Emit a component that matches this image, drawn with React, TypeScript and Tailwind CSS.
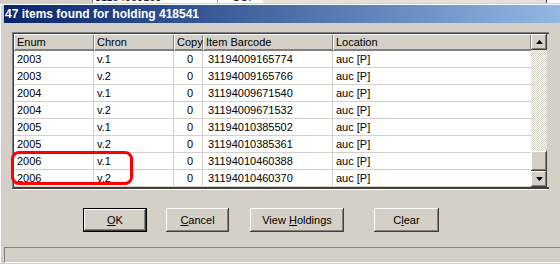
const rows = [
  { enumv: "2003", chron: "v.1", copy: "0", barcode: "31194009165774", loc: "auc [P]" },
  { enumv: "2003", chron: "v.2", copy: "0", barcode: "31194009165766", loc: "auc [P]" },
  { enumv: "2004", chron: "v.1", copy: "0", barcode: "31194009671540", loc: "auc [P]" },
  { enumv: "2004", chron: "v.2", copy: "0", barcode: "31194009671532", loc: "auc [P]" },
  { enumv: "2005", chron: "v.1", copy: "0", barcode: "31194010385502", loc: "auc [P]" },
  { enumv: "2005", chron: "v.2", copy: "0", barcode: "31194010385361", loc: "auc [P]" },
  { enumv: "2006", chron: "v.1", copy: "0", barcode: "31194010460388", loc: "auc [P]" },
  { enumv: "2006", chron: "v.2", copy: "0", barcode: "31194010460370", loc: "auc [P]" },
];

const raised =
  "shadow-[inset_-1px_-1px_0_#404040,inset_1px_1px_0_#ffffff,inset_-2px_-2px_0_#808080,inset_2px_2px_0_#d4d0c8]";

function Arrow({ down }: { down?: boolean }) {
  return (
    <svg width="7" height="4" viewBox="0 0 7 4">
      {down ? <polygon points="0,0 7,0 3.5,4" fill="#000" /> : <polygon points="0,4 7,4 3.5,0" fill="#000" />}
    </svg>
  );
}

function HeaderCell({ label, w }: { label: string; w: string }) {
  return (
    <div
      className={`${w} h-[16px] shrink-0 pl-[3px] flex items-center bg-[#d4d0c8] shadow-[inset_1px_1px_0_#ffffff,inset_-1px_-1px_0_#808080] whitespace-nowrap overflow-hidden`}
    >
      {label}
    </div>
  );
}

function Button({ children, w, isDefault }: { children: React.ReactNode; w: string; isDefault?: boolean }) {
  return (
    <div className={`${w} h-[24px] shrink-0 ${isDefault ? "border border-black" : ""}`}>
      <div className={`w-full h-full flex items-center justify-center bg-[#d4d0c8] ${raised}`}>{children}</div>
    </div>
  );
}

export default function App() {
  return (
    <div className="relative w-[560px] h-[264px] overflow-hidden bg-[#d4d0c8] text-[11px] text-black font-['Liberation_Sans',Arial,sans-serif] leading-none">
      {/* window behind the dialog */}
      <div className="h-[3px] flex overflow-hidden bg-[#d4d0c8]">
        <div className="w-[93px] shrink-0 border-r border-[#808080]" />
        <div className="w-[125px] shrink-0 bg-white border-r border-[#a0a0a0] overflow-hidden">
          <div className="-mt-[8px] pl-[2px]">31194009165</div>
        </div>
        <div className="w-[45px] shrink-0 bg-white overflow-hidden">
          <div className="-mt-[8px] pl-[14px]">COP</div>
        </div>
        <div className="w-[284px] shrink-0 bg-[#e4e2dc] border-r border-[#404040]" />
        <div className="flex-1 bg-white" />
      </div>

      {/* dialog */}
      <div className="border-t border-[#d4d0c8]">
        <div className="border-t border-l border-white pl-[3px]">
          <div className="h-[18px] flex items-center pl-[1px] bg-gradient-to-r from-[#0a246a] to-[#94b8e4] text-white text-[12px] font-bold">
            47 items found for holding 418541
          </div>

          <div className="pt-[9px] pl-[8px]">
            {/* list view */}
            <div className="w-[537px] border-t border-l border-[#808080] border-b border-r-0 border-b-[#ffffff]">
              <div className="border-t border-l border-[#404040] border-b-2 border-b-[#404040] flex">
                <div className="w-[517px] shrink-0 bg-white">
                  <div className="flex border-b border-[#808080]">
                    <HeaderCell label="Enum" w="w-[80px]" />
                    <HeaderCell label="Chron" w="w-[80px]" />
                    <HeaderCell label="Copy" w="w-[29px]" />
                    <HeaderCell label="Item Barcode" w="w-[130px]" />
                    <HeaderCell label="Location" w="w-[198px]" />
                  </div>
                  {rows.map((r, i) => (
                    <div key={i} className="flex h-[17px] border-b border-[#d4d0c8]">
                      <div className="w-[80px] shrink-0 pl-[3px] flex items-center border-r border-[#d4d0c8]">{r.enumv}</div>
                      <div className="w-[80px] shrink-0 pl-[3px] flex items-center border-r border-[#d4d0c8]">{r.chron}</div>
                      <div className="w-[29px] shrink-0 pr-[9px] flex items-center justify-end border-r border-[#d4d0c8]">{r.copy}</div>
                      <div className="w-[130px] shrink-0 pl-[5px] flex items-center border-r border-[#d4d0c8]">{r.barcode}</div>
                      <div className="flex-1 pl-[3px] flex items-center">{r.loc}</div>
                    </div>
                  ))}
                </div>
                {/* scrollbar */}
                <div className="w-[16px] shrink-0 flex flex-col">
                  <div className={`h-[16px] flex items-center justify-center bg-[#d4d0c8] ${raised}`}>
                    <Arrow />
                  </div>
                  <div className="flex-1 bg-[repeating-conic-gradient(#d4d0c8_0%_25%,#ffffff_0%_50%)] bg-[length:2px_2px]" />
                  <div className={`h-[20px] bg-[#d4d0c8] ${raised}`} />
                  <div className={`h-[16px] flex items-center justify-center bg-[#d4d0c8] ${raised}`}>
                    <Arrow down />
                  </div>
                </div>
              </div>
            </div>
          </div>

          {/* buttons */}
          <div className="flex mt-[18px] pl-[79px]">
            <Button w="w-[64px]" isDefault>
              <span>
                <span className="underline">O</span>K
              </span>
            </Button>
            <div className="w-[19px] shrink-0" />
            <Button w="w-[63px]">
              <span>
                <span className="underline">C</span>ancel
              </span>
            </Button>
            <div className="w-[21px] shrink-0" />
            <Button w="w-[94px]">
              <span>
                View <span className="underline">H</span>oldings
              </span>
            </Button>
            <div className="w-[30px] shrink-0" />
            <Button w="w-[65px]">
              <span>
                C<span className="underline">l</span>ear
              </span>
            </Button>
          </div>

          {/* status bar */}
          <div className="mt-[15px] h-[16px] border-t border-l border-[#808080] border-b border-b-white" />
        </div>
      </div>

      {/* red annotation */}
      <div className="absolute left-[11px] top-[151px] w-[122px] h-[34px] border-[3px] border-[#ff0000] rounded-[8px]" />
    </div>
  );
}
